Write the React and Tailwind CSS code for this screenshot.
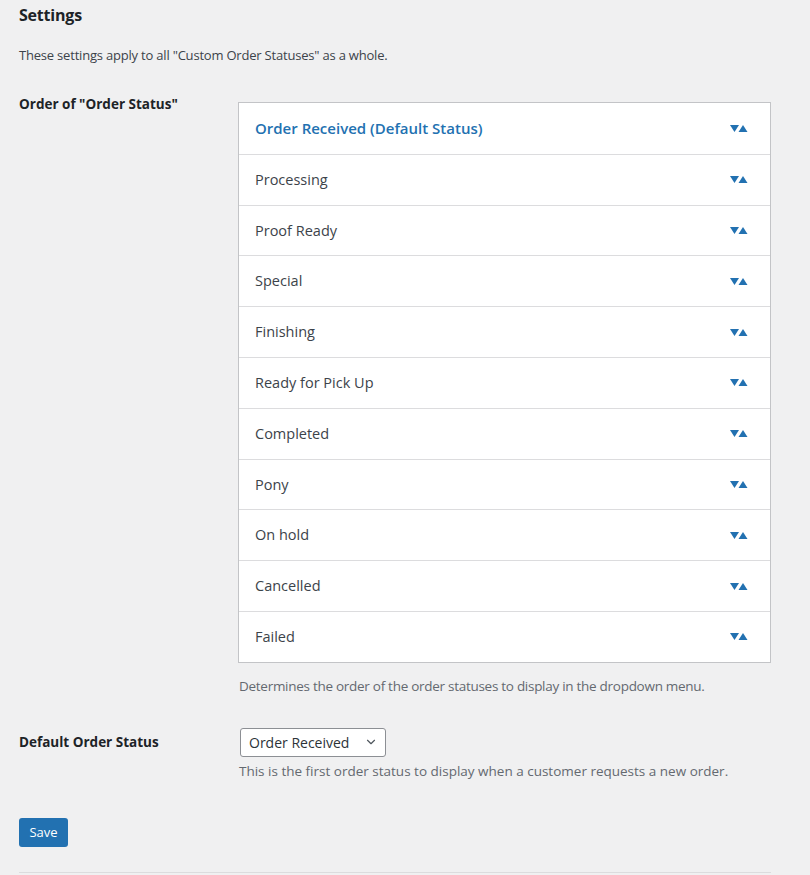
import { ChevronDown } from 'lucide-react';

const statuses = [
  'Order Received (Default Status)',
  'Processing',
  'Proof Ready',
  'Special',
  'Finishing',
  'Ready for Pick Up',
  'Completed',
  'Pony',
  'On hold',
  'Cancelled',
  'Failed',
];

function SortArrows() {
  return (
    <svg width="18" height="7" viewBox="0 0 18 7" className="shrink-0">
      <polygon points="0,0 9,0 4.5,7" fill="#2271b1" />
      <polygon points="8.5,7 17.5,7 13,0" fill="#2271b1" />
    </svg>
  );
}

export default function App() {
  return (
    <div
      className="min-h-[875px] bg-[#f0f0f1] text-[#1d2327] pl-[19px] pr-[39px]"
      style={{ fontFamily: '"Open Sans", "Noto Sans", sans-serif' }}
    >
      <h2 className="pt-[5px] text-[16px] leading-[20px] font-bold tracking-[-0.2px]">Settings</h2>
      <p className="mt-[20px] text-[13px] leading-[20px] tracking-[-0.2px] text-[#3c434a]">
        These settings apply to all "Custom Order Statuses" as a whole.
      </p>

      <div className="mt-[31px] flex">
        <div className="w-[219px] shrink-0 -mt-[2px] text-[13.5px] font-bold leading-[20px]">
          Order of "Order Status"
        </div>
        <div className="w-[533px] pt-[6px]">
          <div className="border border-[#c3c4c7] bg-white">
            {statuses.map((s, i) => (
              <div
                key={s}
                className={`flex h-[50.8px] items-center justify-between pl-[16px] pr-[22px] ${
                  i > 0 ? 'border-t border-[#dcdcde]' : ''
                }`}
              >
                <span
                  className={
                    i === 0
                      ? 'text-[15px] font-semibold text-[#2271b1]'
                      : 'text-[14.5px] text-[#3c434a]'
                  }
                >
                  {s}
                </span>
                <SortArrows />
              </div>
            ))}
          </div>
          <p className="mt-[13px] ml-[1px] text-[13.5px] leading-[20px] tracking-[-0.28px] text-[#646970]">
            Determines the order of the order statuses to display in the dropdown menu.
          </p>
        </div>
      </div>

      <div className="mt-[32px] flex">
        <div className="w-[221px] shrink-0 pt-[4px] text-[13.5px] font-bold leading-[20px]">
          Default Order Status
        </div>
        <div>
          <div className="flex h-[29px] w-[146px] items-center justify-between rounded-[3px] border border-[#8c8f94] bg-white pl-[8px] pr-[7px] text-[14px] text-[#2c3338]">
            <span>Order Received</span>
            <ChevronDown size={14} strokeWidth={2} className="text-[#50575e]" />
          </div>
          <p className="mt-[4px] ml-[-1px] text-[13.5px] leading-[20px] text-[#646970]">
            This is the first order status to display when a customer requests a new order.
          </p>
        </div>
      </div>

      <button className="mt-[37px] h-[29px] w-[49px] rounded-[3px] bg-[#2271b1] text-[13px] text-white">
        Save
      </button>

      <div className="mt-[25px] border-t border-[#dcdcde]" />
    </div>
  );
}
